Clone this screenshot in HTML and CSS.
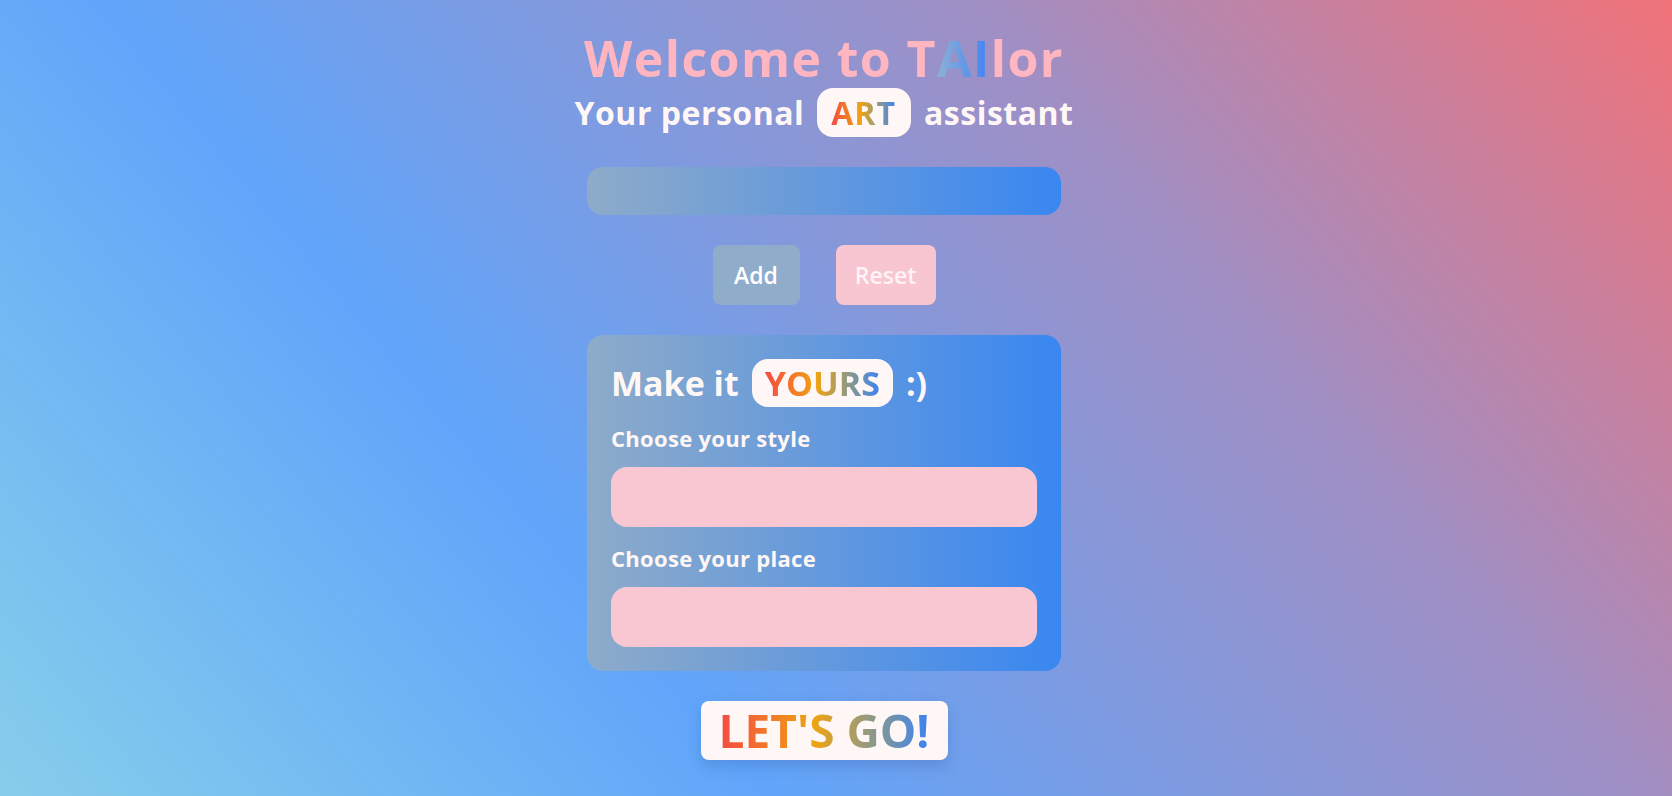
FILE: index.html
```html
<!DOCTYPE html>
<html lang="en">
<head>
<meta charset="utf-8">
<title>TAIlor</title>
<link rel="stylesheet" href="styles.css">
</head>
<body>
<main class="page">
  <h1 class="title">Welcome to T<span class="title-ai">AI</span>lor</h1>
  <h2 class="subtitle">
    <span>Your personal</span>
    <span class="pill pill-art"><span class="rainbow">ART</span></span>
    <span>assistant</span>
  </h2>
  <input class="prompt" type="text" aria-label="Prompt">
  <div class="actions">
    <button class="btn btn-add" type="button">Add</button>
    <button class="btn btn-reset" type="button">Reset</button>
  </div>
  <section class="card">
    <h3 class="card-title">
      <span>Make it</span>
      <span class="pill pill-yours"><span class="rainbow">YOURS</span></span>
      <span>:)</span>
    </h3>
    <label class="field-label" for="style">Choose your style</label>
    <input class="field" id="style" type="text">
    <label class="field-label" for="place">Choose your place</label>
    <input class="field" id="place" type="text">
  </section>
  <button class="go" type="button"><span class="rainbow">LET'S GO!</span></button>
</main>
</body>
</html>
```

FILE: styles.css
```css
* { box-sizing: border-box; }

html, body {
  margin: 0;
  height: 100%;
}

body {
  font-family: "Open Sans", "Noto Sans", sans-serif;
  background: linear-gradient(50deg, #87ceeb 0%, #60a5fa 33%, #9f8fc4 70%, #f07278 100%);
  color: #fff7f5;
  overflow: hidden;
}

.page {
  display: flex;
  flex-direction: column;
  align-items: center;
  padding: 28px 24px 0 0;
  min-height: 100%;
}

.title {
  margin: 0;
  font-size: 50px;
  line-height: 60px;
  font-weight: 700;
  letter-spacing: 1.4px;
  color: #ffb6c1;
  white-space: nowrap;
}

.title-ai {
  background: linear-gradient(90deg, #8fb0d6, #3b82f6);
  -webkit-background-clip: text;
  background-clip: text;
  color: transparent;
}

.subtitle {
  margin: 0;
  display: flex;
  align-items: center;
  font-size: 32px;
  line-height: 49px;
  font-weight: 700;
  letter-spacing: 0.5px;
  color: #fff7f5;
  white-space: nowrap;
}

.pill {
  display: inline-block;
  background: #fff7f5;
}

.pill-art {
  margin: 0 13px;
  padding: 0 15px 0 14px;
  height: 49px;
  border-radius: 16px;
  letter-spacing: 1px;
}

.rainbow {
  background: linear-gradient(90deg, #f44a43 0%, #efa312 45%, #8e9a86 72%, #3b82f6 100%);
  -webkit-background-clip: text;
  background-clip: text;
  color: transparent;
}

.prompt {
  margin-top: 30px;
  width: 474px;
  height: 48px;
  border: none;
  border-radius: 16px;
  background: linear-gradient(90deg, #8eabc9, #3987f1);
  outline: none;
}

.actions {
  margin-top: 30px;
  display: flex;
  gap: 36px;
}

.btn {
  height: 60px;
  padding: 0;
  border: none;
  border-radius: 8px;
  font-family: inherit;
  font-size: 23px;
  font-weight: 600;
  color: #ffffff;
}

.btn-add {
  width: 87px;
  background: #8facca;
}

.btn-reset {
  width: 100px;
  background: #f8c6d1;
  color: #fff3f5;
}

.card {
  margin-top: 30px;
  width: 474px;
  padding: 24px;
  border-radius: 16px;
  background: linear-gradient(90deg, #8eabc9, #3987f1);
  display: flex;
  flex-direction: column;
}

.card-title {
  margin: 0;
  display: flex;
  align-items: center;
  height: 48px;
  font-size: 34px;
  line-height: 48px;
  font-weight: 700;
  color: #fff7f5;
  white-space: nowrap;
}

.pill-yours {
  margin: 0 13px 0 13px;
  padding: 0 13px;
  height: 48px;
  border-radius: 16px;
}

.field-label {
  margin-top: 16px;
  font-size: 22px;
  line-height: 30px;
  font-weight: 700;
  letter-spacing: 0.3px;
  color: #fff7f5;
}

.field {
  margin-top: 14px;
  width: 100%;
  height: 60px;
  border: none;
  border-radius: 16px;
  background: #f8c7d1;
  outline: none;
}

.go {
  margin-top: 30px;
  width: 247px;
  height: 59px;
  border: none;
  border-radius: 8px;
  background: #fff7f5;
  box-shadow: 0 6px 14px rgba(40, 70, 140, 0.22);
  font-family: inherit;
  font-size: 46px;
  font-weight: 700;
  padding: 0;
  line-height: 59px;
}
```
